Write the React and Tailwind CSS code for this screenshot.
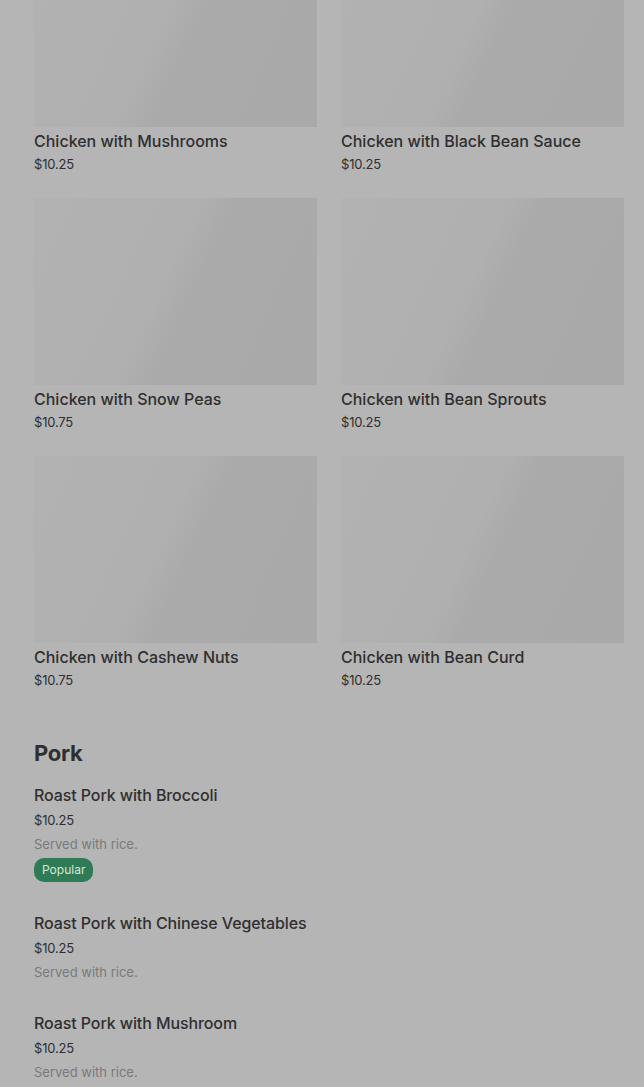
import React from "react";

const cards = [
  ["Chicken with Mushrooms", "$10.25"],
  ["Chicken with Black Bean Sauce", "$10.25"],
  ["Chicken with Snow Peas", "$10.75"],
  ["Chicken with Bean Sprouts", "$10.25"],
  ["Chicken with Cashew Nuts", "$10.75"],
  ["Chicken with Bean Curd", "$10.25"],
];

const pork = [
  ["Roast Pork with Broccoli", "$10.25", "Served with rice.", true],
  ["Roast Pork with Chinese Vegetables", "$10.25", "Served with rice.", false],
  ["Roast Pork with Mushroom", "$10.25", "Served with rice.", false],
];

export default function App() {
  return (
    <div
      className="min-h-[1087px] w-full overflow-hidden bg-[#b5b5b5] pl-[34px] pr-[20px]"
      style={{ fontFamily: "Inter, 'Noto Sans', sans-serif" }}
    >
      <div className="-mt-[60px] grid grid-cols-2 gap-x-[24px] gap-y-[24px]">
        {cards.map(([name, price]) => (
          <div key={name} className="flex flex-col">
            <div className="h-[187px] w-full bg-[linear-gradient(115deg,#b2b2b2_0%,#b0b0b0_45%,#aaaaaa_55%,#a9a9a9_100%)]" />
            <div className="mt-1 text-[16px] leading-[20px] font-medium text-[#2f2f2f]">{name}</div>
            <div className="mt-[3px] text-[13px] leading-[20px] tracking-[-0.2px] text-[#2f2f2f]">{price}</div>
          </div>
        ))}
      </div>
      <h2 className="mt-[49px] text-[22px] leading-[28px] font-bold tracking-[-0.3px] text-[#2f2f2f]">Pork</h2>
      <div className="mt-[18px] flex flex-col gap-[31px]">
        {pork.map(([name, price, desc, popular]) => (
          <div key={name} className="flex flex-col items-start">
            <div className="text-[16px] leading-[20px] font-medium tracking-[-0.1px] text-[#2f2f2f]">{name}</div>
            <div className="mt-[5px] text-[13px] leading-[20px] tracking-[-0.2px] text-[#2f2f2f]">{price}</div>
            <div className="mt-1 text-[13px] leading-[20px] text-[#7a7a7a]">{desc}</div>
            {popular && (
              <div className="mt-1 flex h-[24px] items-center rounded-[10px] bg-[#2f7b55] px-[8px] text-[12px] text-[#d6e6dc]">
                Popular
              </div>
            )}
          </div>
        ))}
      </div>
    </div>
  );
}
